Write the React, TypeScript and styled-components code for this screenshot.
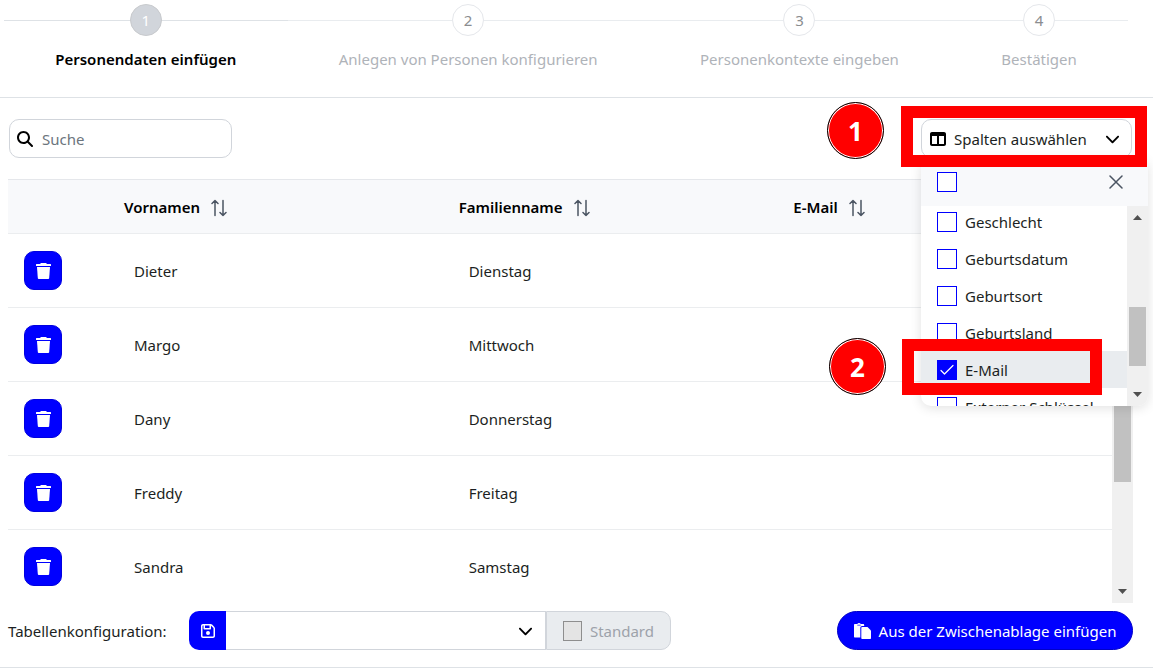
import React from "react";
import styled, { createGlobalStyle, css } from "styled-components";
import {
  FaMagnifyingGlass,
  FaTableColumns,
  FaChevronDown,
  FaRegFloppyDisk,
} from "react-icons/fa6";

const blue = "#0000ff";
const line = "#e5e7eb";
const border = "#d1d5db";
const red = "#ff0000";

const GlobalStyle = createGlobalStyle`
  *, *::before, *::after { box-sizing: border-box; }
  body {
    margin: 0;
    background: #fff;
    color: #1c1f23;
    font-family: "Segoe UI", "Noto Sans", "Open Sans", sans-serif;
    font-size: 15px;
    line-height: 24px;
  }
  button, input, select { font: inherit; color: inherit; margin: 0; }
  button { cursor: pointer; }
`;

const Page = styled.main`
  overflow: hidden;
`;

/* Wizard steps */

const Steps = styled.ol`
  display: flex;
  list-style: none;
  margin: 0;
  padding: 4px 25px 26px 4px;
  border-bottom: 1px solid #dee2e6;
`;

const Step = styled.li<{ $active?: boolean }>`
  flex: 1 1 auto;
  position: relative;
  display: flex;
  justify-content: center;

  &::before {
    content: "";
    position: absolute;
    top: 16px;
    left: 0;
    right: 0;
    border-top: 1px solid ${(p) => (p.$active ? "#dee2e6" : "#e9ecef")};
  }
`;

const StepButton = styled.button<{ $active?: boolean }>`
  position: relative;
  display: flex;
  flex-direction: column;
  align-items: center;
  gap: 11px;
  padding: 0;
  border: 0;
  background: none;
  white-space: nowrap;
  color: ${(p) => (p.$active ? "#000" : "#afb3b9")};
  font-weight: ${(p) => (p.$active ? 600 : 400)};
`;

const StepNumber = styled.span<{ $active?: boolean }>`
  display: grid;
  place-items: center;
  width: 32px;
  height: 32px;
  border-radius: 50%;
  border: 1px solid ${(p) => (p.$active ? "#c8cacd" : line)};
  background: ${(p) => (p.$active ? border : "#fff")};
  color: ${(p) => (p.$active ? "#fff" : "#8b8d90")};
  font-weight: 400;
`;

/* Toolbar */

const Toolbar = styled.div`
  display: flex;
  justify-content: space-between;
  padding: 21px 21px 21px 9px;
`;

const SearchBox = styled.label`
  display: flex;
  align-items: center;
  gap: 9px;
  width: 223px;
  height: 39px;
  padding: 0 7px;
  border: 1px solid ${border};
  border-radius: 10px;
  color: #000;
`;

const SearchInput = styled.input`
  flex: 1;
  min-width: 0;
  padding: 0;
  border: 0;
  outline: 0;
  background: none;
  &::placeholder { color: #6c757d; opacity: 1; }
`;

const Picker = styled.div`
  position: relative;
  z-index: 2;
`;

const PickerButton = styled.button`
  display: flex;
  align-items: center;
  gap: 8px;
  width: 211px;
  height: 39px;
  padding: 0 11px 0 8px;
  border: 1px solid ${border};
  border-radius: 10px;
  background: #fff;
  white-space: nowrap;
  svg { color: #000; }
  svg:last-child { margin-left: auto; }
`;

const Dropdown = styled.div`
  position: absolute;
  top: 39px;
  left: 0;
  width: 227px;
  border-radius: 10px;
  background: #fff;
  overflow: hidden;
  box-shadow: 0 2px 12px rgba(0, 0, 0, 0.12);
`;

const DropdownHead = styled.div`
  display: flex;
  align-items: center;
  justify-content: space-between;
  height: 48px;
  padding: 0 25px 0 16px;
  background: #f8f9fb;
`;

const CloseButton = styled.button`
  display: grid;
  place-items: center;
  padding: 0;
  border: 0;
  background: none;
  color: #4b5563;
`;

const DropdownBody = styled.div`
  display: flex;
  height: 200px;
`;

const OptionViewport = styled.div`
  flex: 1;
  overflow: hidden;
`;

const OptionList = styled.ul`
  list-style: none;
  margin: -3px 0 0;
  padding: 0;
`;

const Option = styled.li<{ $selected?: boolean }>`
  height: 37px;
  background: ${(p) => (p.$selected ? "#e9ecef" : "transparent")};
`;

const OptionLabel = styled.label`
  display: flex;
  align-items: center;
  gap: 8px;
  height: 100%;
  padding: 0 16px;
  white-space: nowrap;
`;

const CheckWrap = styled.span`
  display: inline-grid;
  place-items: center;
  flex: none;
  > * { grid-area: 1 / 1; }
  svg { position: relative; pointer-events: none; }
`;

const CheckBox = styled.input`
  appearance: none;
  width: 20px;
  height: 20px;
  border: 1px solid ${blue};
  background: #fff;
  &:checked { background: ${blue}; }
  &:disabled { border-color: #8e8e8e; background: #e4e4e4; }
`;

/* Scroll bars */

const Track = styled.div`
  display: flex;
  flex-direction: column;
  align-items: center;
  justify-content: space-between;
  flex: none;
  width: 21px;
  padding: 9px 0;
  background: #f0f0f0;
  color: #505050;
`;

const Thumb = styled.div<{ $offset: number; $length: number }>`
  width: 17px;
  height: ${(p) => p.$length}px;
  margin-top: ${(p) => p.$offset}px;
  margin-bottom: auto;
  background: #c1c1c1;
`;

/* Numbered callouts */

const Frame = styled.div<{ $second?: boolean }>`
  position: absolute;
  pointer-events: none;
  border: 12px solid ${red};
  ${(p) =>
    p.$second
      ? css`top: 220px; left: -19px; width: 200px; height: 56px;`
      : css`top: -13px; left: -20px; width: 246px; height: 61px;`}
`;

const Callout = styled.div<{ $second?: boolean }>`
  position: absolute;
  display: grid;
  place-items: center;
  width: 57px;
  height: 57px;
  border: 1px solid #000;
  border-radius: 50%;
  background: ${red};
  box-shadow: inset 0 0 0 1px #fff;
  color: #fff;
  font-size: 26px;
  font-weight: 700;
  ${(p) =>
    p.$second ? css`top: 219px; left: -92px;` : css`top: -17px; left: -94px;`}
`;

/* Table */

const TableArea = styled.div`
  display: flex;
  padding: 0 20px 0 8px;
`;

const TableViewport = styled.div`
  flex: 1;
  min-width: 0;
`;

const Table = styled.table`
  width: 100%;
  table-layout: fixed;
  border-collapse: separate;
  border-spacing: 0;
  border-top: 1px solid ${line};
  text-align: left;
  th { background: #f8f9fb; color: #000; font-weight: 600; }
  th, td { border-bottom: 1px solid #ebedef; }
  tbody tr:last-child td { border-bottom: 0; height: 73px; }
`;

const HeadCell = styled.th<{ $narrow?: boolean }>`
  width: ${(p) => (p.$narrow ? "100px" : "auto")};
  height: 54px;
  padding: 0 16px;
`;

const SortButton = styled.button`
  display: flex;
  align-items: center;
  gap: 11px;
  padding: 0;
  border: 0;
  background: none;
  font-weight: 600;
  svg { color: #4b5563; margin-top: 3px; }
`;

const Cell = styled.td<{ $action?: boolean }>`
  height: 74px;
  padding: 0 ${(p) => (p.$action ? 16 : 26)}px;
`;

const DeleteButton = styled.button`
  display: grid;
  place-items: center;
  width: 38px;
  height: 39px;
  border: 1px solid #0000e0;
  border-radius: 10px;
  background: ${blue};
  color: #fff;
`;

/* Footer */

const Footer = styled.footer`
  display: flex;
  align-items: center;
  justify-content: space-between;
  padding: 8px 20px 17px 8px;
  border-bottom: 1px solid #dee2e6;
`;

const Config = styled.div`
  display: flex;
  align-items: center;
`;

const ConfigLabel = styled.label`
  width: 181px;
`;

const SaveButton = styled.button`
  display: grid;
  place-items: center;
  width: 37px;
  height: 39px;
  padding: 0;
  border: 0;
  border-radius: 10px 0 0 10px;
  background: ${blue};
  color: #fff;
`;

const SelectWrap = styled.div`
  display: grid;
  align-items: center;
  justify-items: end;
  > * { grid-area: 1 / 1; }
  svg { margin-right: 13px; pointer-events: none; color: #000; }
`;

const Select = styled.select`
  appearance: none;
  width: 320px;
  height: 39px;
  border: 1px solid ${border};
  border-left: 0;
  border-radius: 0;
  background: #fff;
`;

const DefaultOption = styled.label`
  display: flex;
  align-items: center;
  gap: 8px;
  height: 39px;
  width: 125px;
  padding: 0 16px;
  border: 1px solid ${border};
  border-radius: 0 10px 10px 0;
  background: #e9ecef;
  color: #9da2aa;
`;

const PasteButton = styled.button`
  display: flex;
  align-items: center;
  justify-content: center;
  gap: 8px;
  height: 39px;
  width: 296px;
  padding: 0;
  border: 1px solid #0000c8;
  border-radius: 20px;
  background: ${blue};
  color: #fff;
  white-space: nowrap;
`;

function SortIcon() {
  return (
    <svg width="16" height="18" viewBox="0 0 16 18" fill="none" stroke="currentColor" strokeWidth="1.5" strokeLinecap="round" strokeLinejoin="round">
      <path d="M4 16.5V1.5M1 4.5L4 1.5L7 4.5M12 1.5V16.5M9 13.5L12 16.5L15 13.5" />
    </svg>
  );
}

function CloseIcon() {
  return (
    <svg width="14" height="14" viewBox="0 0 14 14" fill="none" stroke="currentColor" strokeWidth="1.5" strokeLinecap="round">
      <path d="M1 1L13 13M13 1L1 13" />
    </svg>
  );
}

function TrashIcon() {
  return (
    <svg width="15" height="16" viewBox="0 0 15 16" fill="currentColor">
      <path d="M4.2 1L4.8 0H10.2L10.8 1H14.5C14.8 1 15 1.2 15 1.5V3H0V1.5C0 1.2 0.2 1 0.5 1Z" />
      <path d="M1 4H14L13.2 14.9C13.1 15.6 12.6 16 12 16H3C2.4 16 1.9 15.6 1.8 14.9Z" />
    </svg>
  );
}

function PasteIcon() {
  return (
    <svg width="17" height="16" viewBox="0 0 17 16" fill="currentColor">
      <path d="M0 2C0 1.4 0.4 1 1 1H3.3C3.6 0.3 4.2 0 5 0S6.4 0.3 6.7 1H9C9.8 1 10.2 1.5 10.2 2.3V3H8.3C7 3 6.3 3.8 6.3 5V14.5H1C0.4 14.5 0 14.1 0 13.5Z" />
      <path d="M7.3 5C7.3 4.3 7.7 4 8.3 4H13.5L17 7.5V15C17 15.6 16.6 16 16 16H8.3C7.7 16 7.3 15.6 7.3 15Z" />
      <path d="M3.3 2.2H6.7" stroke={blue} strokeWidth="0.7" />
    </svg>
  );
}

function Check({ checked = false, label }: { checked?: boolean; label?: string }) {
  return (
    <CheckWrap>
      <CheckBox type="checkbox" defaultChecked={checked} aria-label={label} />
      {checked && (
        <svg width="14" height="12" viewBox="0 0 14 12" fill="none" stroke="#fff" strokeWidth="1.2" strokeLinecap="round" strokeLinejoin="round">
          <path d="M1 6.5L4.5 10L13 1.5" />
        </svg>
      )}
    </CheckWrap>
  );
}

function ScrollBar({ offset, length }: { offset: number; length: number }) {
  return (
    <Track aria-hidden="true">
      <svg width="9" height="5" viewBox="0 0 9 5"><path fill="currentColor" d="M4.5 0L9 5H0Z" /></svg>
      <Thumb $offset={offset} $length={length} />
      <svg width="9" height="5" viewBox="0 0 9 5"><path fill="currentColor" d="M0 0H9L4.5 5Z" /></svg>
    </Track>
  );
}

const steps = [
  "Personendaten einfügen",
  "Anlegen von Personen konfigurieren",
  "Personenkontexte eingeben",
  "Bestätigen",
];
const options = ["Geschlecht", "Geburtsdatum", "Geburtsort", "Geburtsland", "E-Mail", "Externer Schlüssel"];
const columns = ["Vornamen", "Familienname", "E-Mail"];
const people = [
  ["Dieter", "Dienstag"],
  ["Margo", "Mittwoch"],
  ["Dany", "Donnerstag"],
  ["Freddy", "Freitag"],
  ["Sandra", "Samstag"],
];

export default function App() {
  return (
    <Page>
      <GlobalStyle />
      <Steps>
        {steps.map((name, i) => (
          <Step key={name} $active={i === 0}>
            <StepButton type="button" $active={i === 0}>
              <StepNumber $active={i === 0}>{i + 1}</StepNumber>
              {name}
            </StepButton>
          </Step>
        ))}
      </Steps>

      <Toolbar>
        <SearchBox>
          <FaMagnifyingGlass size={16} />
          <SearchInput type="text" placeholder="Suche" aria-label="Suche" />
        </SearchBox>
        <Picker>
          <PickerButton type="button" aria-expanded="true">
            <FaTableColumns size={16} />
            Spalten auswählen
            <FaChevronDown size={15} />
          </PickerButton>
          <Dropdown>
            <DropdownHead>
              <Check label="Alle auswählen" />
              <CloseButton type="button" aria-label="Schließen"><CloseIcon /></CloseButton>
            </DropdownHead>
            <DropdownBody>
              <OptionViewport>
                <OptionList>
                  {options.map((name) => (
                    <Option key={name} $selected={name === "E-Mail"}>
                      <OptionLabel>
                        <Check checked={name === "E-Mail"} />
                        {name}
                      </OptionLabel>
                    </Option>
                  ))}
                </OptionList>
              </OptionViewport>
              <ScrollBar offset={87} length={59} />
            </DropdownBody>
          </Dropdown>
          <Frame />
          <Frame $second />
          <Callout>1</Callout>
          <Callout $second>2</Callout>
        </Picker>
      </Toolbar>

      <TableArea>
        <TableViewport>
          <Table>
            <thead>
              <tr>
                <HeadCell $narrow aria-label="Löschen" />
                {columns.map((name) => (
                  <HeadCell key={name}>
                    <SortButton type="button">
                      {name}
                      <SortIcon />
                    </SortButton>
                  </HeadCell>
                ))}
              </tr>
            </thead>
            <tbody>
              {people.map(([first, last]) => (
                <tr key={first}>
                  <Cell $action>
                    <DeleteButton type="button" aria-label={`${first} löschen`}>
                      <TrashIcon />
                    </DeleteButton>
                  </Cell>
                  <Cell>{first}</Cell>
                  <Cell>{last}</Cell>
                  <Cell />
                </tr>
              ))}
            </tbody>
          </Table>
        </TableViewport>
        <ScrollBar offset={12} length={277} />
      </TableArea>

      <Footer>
        <Config>
          <ConfigLabel htmlFor="config">Tabellenkonfiguration:</ConfigLabel>
          <SaveButton type="button" aria-label="Speichern">
            <FaRegFloppyDisk size={16} />
          </SaveButton>
          <SelectWrap>
            <Select id="config" defaultValue="">
              <option value="" />
            </Select>
            <FaChevronDown size={15} />
          </SelectWrap>
          <DefaultOption>
            <CheckBox type="checkbox" disabled />
            Standard
          </DefaultOption>
        </Config>
        <PasteButton type="button">
          <PasteIcon />
          Aus der Zwischenablage einfügen
        </PasteButton>
      </Footer>
    </Page>
  );
}
